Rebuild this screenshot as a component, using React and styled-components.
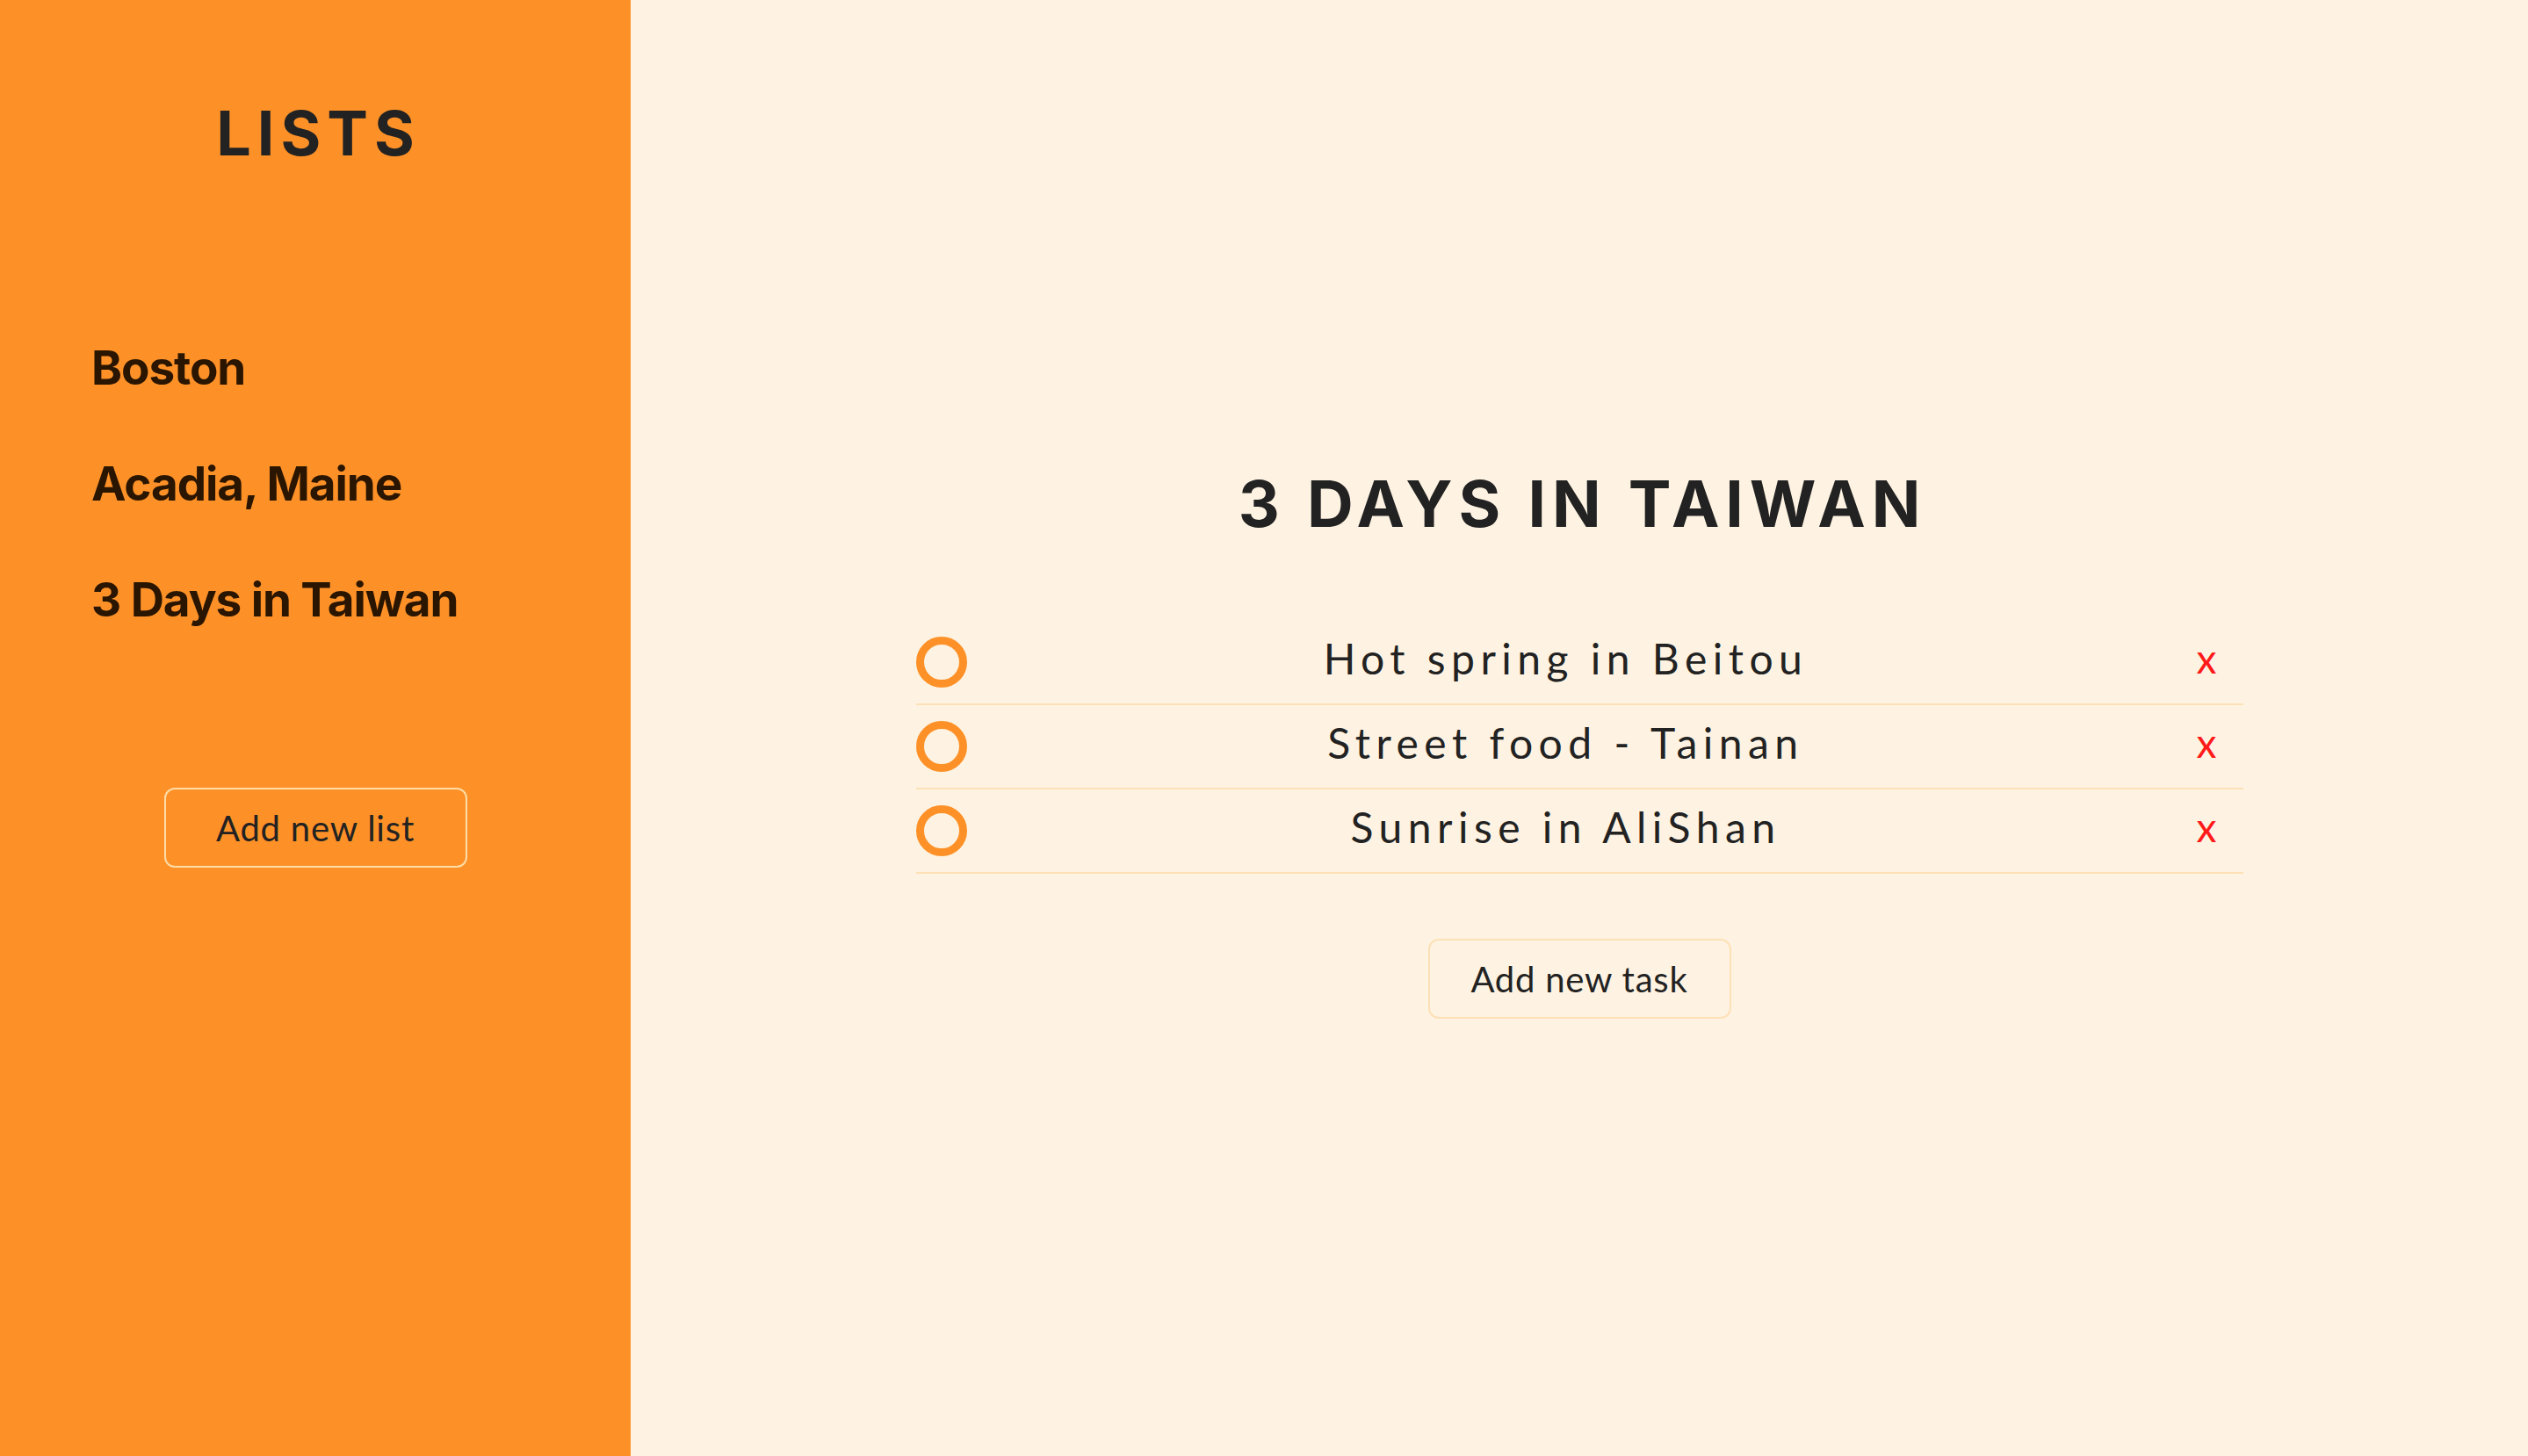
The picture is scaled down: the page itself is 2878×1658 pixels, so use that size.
import styled, { createGlobalStyle } from 'styled-components';

const GlobalStyle = createGlobalStyle`
html, body {
  margin: 0;
  padding: 0;
  background: #fef3e2;
}
* { box-sizing: border-box; }
`

const lists = ["Boston", "Acadia, Maine", "3 Days in Taiwan"]
const tasks = ["Hot spring in Beitou", "Street food - Tainan", "Sunrise in AliShan"]

const App = () => {
    return (
        <Page>
            <GlobalStyle />
            <Sidebar>
                <SidebarTitle>LISTS</SidebarTitle>
                <ListNav>
                    {lists.map((name) => (
                        <ListLink key={name}>{name}</ListLink>
                    ))}
                </ListNav>
                <AddButton $border="#ffdca6" $gap="148px">Add new list</AddButton>
            </Sidebar>
            <Main>
                <MainTitle>3 DAYS IN TAIWAN</MainTitle>
                <TaskList>
                    {tasks.map((task) => (
                        <TaskRow key={task}>
                            <Check />
                            <TaskText>{task}</TaskText>
                            <Delete>x</Delete>
                        </TaskRow>
                    ))}
                </TaskList>
                <AddButton $border="#fde0b6" $gap="74px">Add new task</AddButton>
            </Main>
        </Page>
    )
};

const Page = styled.div`
display: flex;
min-height: 100vh;`

const Sidebar = styled.aside`
width: 718px;
flex-shrink: 0;
background: #fd9128;
display: flex;
flex-direction: column;
align-items: center;
padding-top: 112px;`

const SidebarTitle = styled.h1`
margin: 0;
font-family: Inter, "Noto Sans", sans-serif;
font-weight: 700;
font-size: 70px;
line-height: 80px;
letter-spacing: 0.1em;
margin-right: -0.1em;
color: #222;`

const ListNav = styled.nav`
align-self: stretch;
display: flex;
flex-direction: column;
padding-left: 104px;
margin-top: 161px;`

const ListLink = styled.div`
font-family: Inter, "Noto Sans", sans-serif;
font-weight: 700;
font-size: 53px;
line-height: 132px;
letter-spacing: -0.02em;
color: #2a1500;
cursor: pointer;`

const AddButton = styled.button`
margin-top: ${(p) => p.$gap};
width: 345px;
height: 91px;
background: transparent;
border: 2px solid ${(p) => p.$border};
border-radius: 12px;
font-family: Lato, "Noto Sans", sans-serif;
font-size: 40px;
letter-spacing: 0.02em;
color: #222;
cursor: pointer;`

const Main = styled.main`
flex: 1;
display: flex;
flex-direction: column;
align-items: center;
padding-top: 530px;`

const MainTitle = styled.h2`
margin: 0;
font-family: Inter, "Noto Sans", sans-serif;
font-weight: 700;
font-size: 73px;
line-height: 88px;
letter-spacing: 0.095em;
margin-right: -0.095em;
color: #222;`

const TaskList = styled.ul`
list-style: none;
margin: 89px 0 0;
padding: 0;
width: 1511px;`

const TaskRow = styled.li`
height: 96px;
display: flex;
align-items: center;
border-bottom: 2px solid #fde0b6;`

const Check = styled.span`
width: 58px;
height: 58px;
border: 9px solid #fd9128;
border-radius: 50%;
flex-shrink: 0;`

const TaskText = styled.span`
flex: 1;
text-align: center;
padding-bottom: 10px;
font-family: Lato, "Noto Sans", sans-serif;
font-size: 48px;
letter-spacing: 0.135em;
color: #222;`

const Delete = styled.span`
width: 89px;
padding-right: 30px;
padding-bottom: 10px;
text-align: right;
font-family: Lato, "Noto Sans", sans-serif;
font-size: 46px;
color: #ff1a1a;
cursor: pointer;`

export default App
